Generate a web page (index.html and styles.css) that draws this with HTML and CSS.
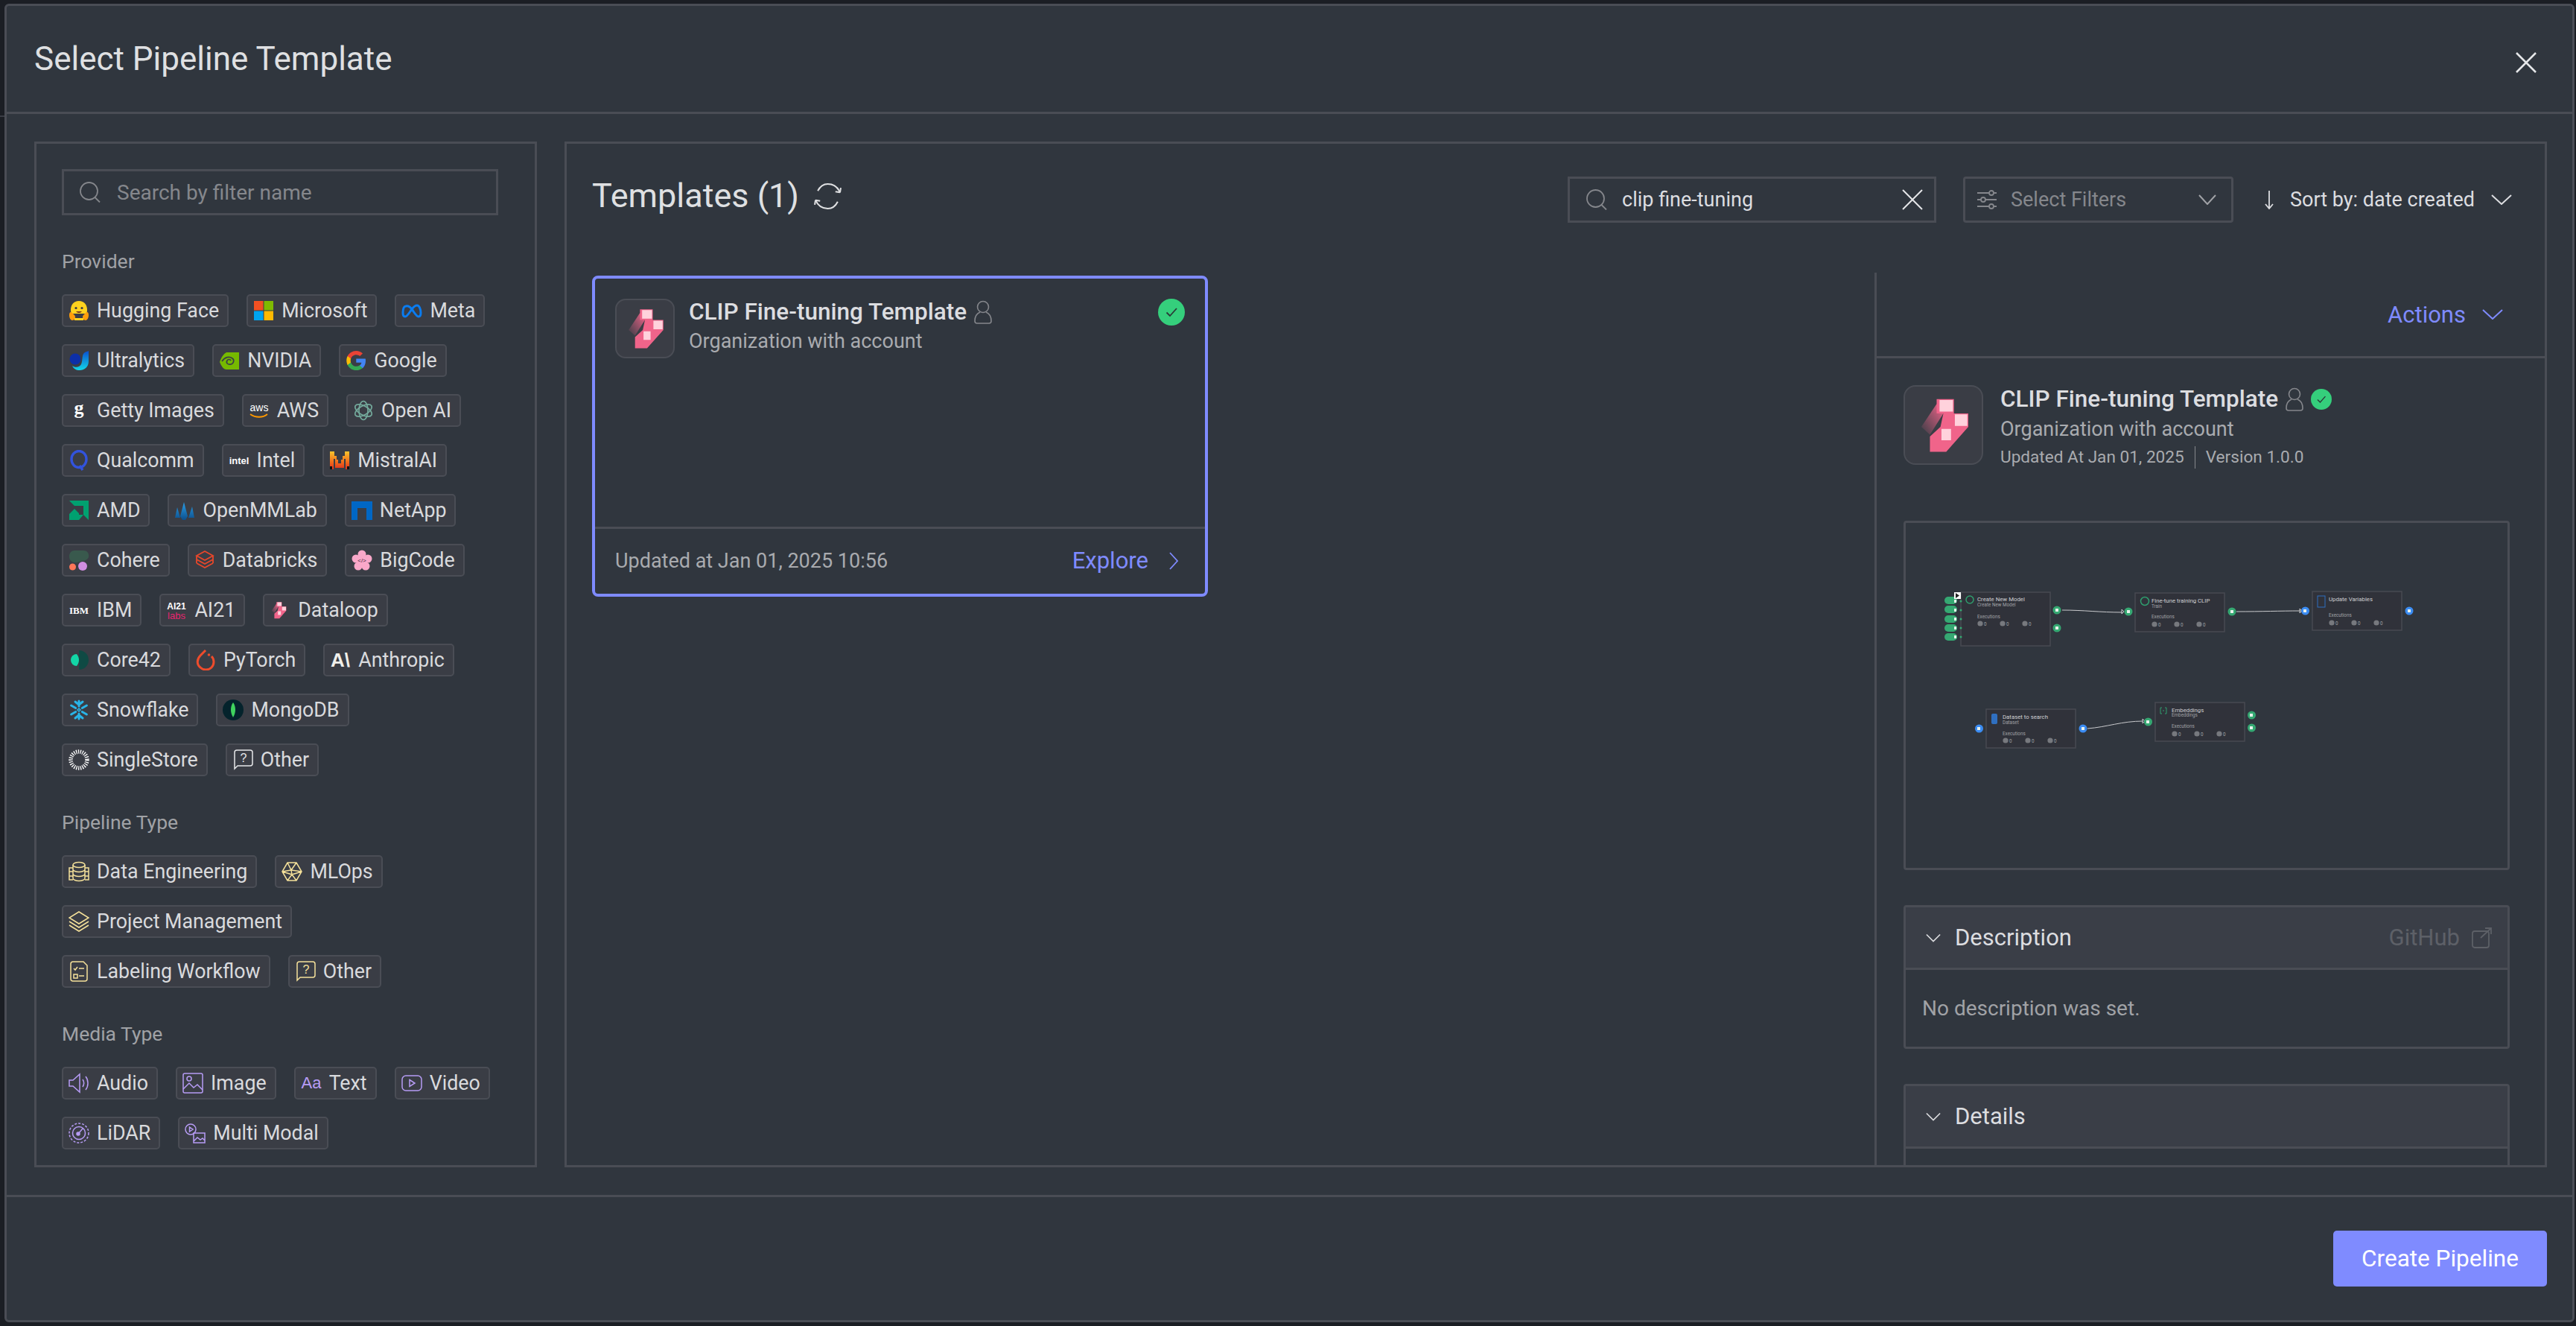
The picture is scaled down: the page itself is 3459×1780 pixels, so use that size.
FILE: index.html
```html
<!DOCTYPE html>
<html lang="en">
<head>
  <meta charset="UTF-8">
  <title>Select Pipeline Template</title>
  <link rel="stylesheet" href="styles.css">
</head>
<body>
<svg class="defs" aria-hidden="true">
  <defs>
    <linearGradient id="fade" x1="1" y1="0" x2="0" y2="1">
      <stop offset="0" stop-color="#f0648a"/>
      <stop offset="1" stop-color="#f0648a" stop-opacity="0"/>
    </linearGradient>
    <linearGradient id="ultra" x1="0" y1="0" x2="0" y2="1">
      <stop offset="0" stop-color="#0b4fd0"/>
      <stop offset="1" stop-color="#12d6e8"/>
    </linearGradient>
    <linearGradient id="mistral" x1="0" y1="0" x2="0" y2="1">
      <stop offset="0" stop-color="#f7c52d"/>
      <stop offset="0.6" stop-color="#f26a1b"/>
      <stop offset="1" stop-color="#e0301e"/>
    </linearGradient>
    <linearGradient id="mm" x1="0" y1="0" x2="0" y2="1">
      <stop offset="0" stop-color="#2a9fe8"/>
      <stop offset="1" stop-color="#0d4f8c"/>
    </linearGradient>
    <symbol id="dataloop" viewBox="0 0 80 80">
      <path d="M17 42 33 18 40 28 26 50Z" fill="url(#fade)"/>
      <path d="M33 13H51V28H66V42L43 68H26V52L37 42 40 28H33Z" fill="#f0648a"/>
      <path d="M36 14H50V26H36ZM52 29H65V41H52ZM38 44H48V56H38Z" fill="#ffd2dc"/>
    </symbol>
    <symbol id="exec" viewBox="0 0 100 10">
      <circle cx="4" cy="5" r="3.600" fill="#77797e"/>
      <text x="9" y="7.600" class="n-sub">0</text>
      <circle cx="34" cy="5" r="3.600" fill="#77797e"/>
      <text x="39" y="7.600" class="n-sub">0</text>
      <circle cx="64" cy="5" r="3.600" fill="#77797e"/>
      <text x="69" y="7.600" class="n-sub">0</text>
    </symbol>
    <symbol id="person" viewBox="0 0 24 32">
      <circle cx="12" cy="9" r="7.500" fill="none" stroke="currentColor" stroke-width="1.600"/>
      <path d="M8 16C3 18 1 23 1 28 1 30 2 31 4 31H20C22 31 23 30 23 28 23 23 21 18 16 16" fill="none" stroke="currentColor" stroke-width="1.600"/>
    </symbol>
    <symbol id="check" viewBox="0 0 36 36">
      <circle cx="18" cy="18" r="18" fill="#35cf7c"/>
      <path d="M11.500 18.500 16 23 25 13" fill="none" stroke="#2b3a38" stroke-width="1.800"/>
    </symbol>
  </defs>
</svg>

<div class="modal">
  <header class="modal-head">
    <h1>Select Pipeline Template</h1>
    <svg class="close" viewBox="0 0 28 28"><path d="M1 1 27 27M27 1 1 27"/></svg>
  </header>

  <div class="modal-body">
    <aside class="filters">
      <div class="filter-search">
        <svg class="ico-search" viewBox="0 0 28 28"><circle cx="12.500" cy="12.500" r="11.500"/><path d="M20.500 21 27 27.500"/></svg>
        <span>Search by filter name</span>
      </div>

      <h3 class="filter-title">Provider</h3>
      <div class="chips">
        <span class="chip"><svg viewBox="0 0 28 28"><path d="M14 1C7 1 3 6 3 13c0 2 .5 4 1 5h20c.6-1 1-3 1-5 0-7-4-12-11-12Z" fill="#ffd21e"/><circle cx="10" cy="10.500" r="1.600" fill="#3a3b45"/><circle cx="18" cy="10.500" r="1.600" fill="#3a3b45"/><path d="M10 15c2 2.600 6 2.600 8 0" fill="#6b2b20"/><path d="M1 20c0-4 2-5 4-3l3 3c2 2 1 7-3 7-2 0-4-3-4-7ZM27 20c0-4-2-5-4-3l-3 3c-2 2-1 7 3 7 2 0 4-3 4-7Z" fill="#ff9d0b"/><path d="M8 24h12v3H8Z" fill="#ffd21e"/></svg>Hugging Face</span>
        <span class="chip"><svg viewBox="0 0 28 28"><path d="M1 1H13.500V13.500H1Z" fill="#f25022"/><path d="M14.500 1H27V13.500H14.500Z" fill="#7fba00"/><path d="M1 14.500H13.500V27H1Z" fill="#00a4ef"/><path d="M14.500 14.500H27V27H14.500Z" fill="#ffb900"/></svg>Microsoft</span>
        <span class="chip"><svg viewBox="0 0 28 28"><path d="M6 8C3 8 2 13 2 17c0 3 1 5 3 5 3 0 6-6 9-10 3-4 5-5 7-5 3 0 5 5 5 10 0 3-1 5-3 5-3 0-6-6-9-10-3-4-5-5-8-4Z" fill="none" stroke="#0a7cf0" stroke-width="3"/></svg>Meta</span>
        <span class="chip"><svg viewBox="0 0 28 28"><path d="M27 1V15C27 23 21 27 15 27 10 27 7 25 5 21 9 24 15 23 17 19 19 15 18 8 20 5 22 2 25 2 27 1Z" fill="url(#ultra)"/><circle cx="9" cy="12" r="7.500" fill="#0d2fa8"/></svg>Ultralytics</span>
        <span class="chip"><svg viewBox="0 0 28 28"><path d="M10 3H27V26H10C6 26 3 21 1 16 3 10 6 5 10 3Z" fill="#76b900"/><path d="M4 15C8 9 14 8 18 11 21 13 20 18 16 19 12 20 9 17 11 14 12 12 15 12 16 14" fill="none" stroke="#3a3e47" stroke-width="1.700"/></svg>NVIDIA</span>
        <span class="chip"><svg viewBox="0 0 28 28"><path d="M27 14.300c0-1-.1-1.900-.3-2.800H14.300v5.300h7.100c-.3 1.700-1.200 3.100-2.600 4v3.400h4.200c2.500-2.300 4-5.700 4-9.900Z" fill="#4285f4"/><path d="M14.300 27c3.500 0 6.500-1.200 8.600-3.100l-4.200-3.300c-1.200.8-2.700 1.200-4.400 1.200-3.400 0-6.200-2.300-7.200-5.300H2.700v3.400C4.800 24.100 9.200 27 14.300 27Z" fill="#34a853"/><path d="M7.100 16.500c-.3-.8-.4-1.600-.4-2.500s.2-1.700.4-2.500V8.100H2.700C1.800 9.900 1.300 11.900 1.300 14s.5 4.100 1.400 5.900l4.400-3.400Z" fill="#fbbc05"/><path d="M14.300 6.200c1.900 0 3.600.7 5 1.900l3.700-3.700C20.800 2.300 17.800 1 14.300 1 9.200 1 4.800 3.900 2.700 8.100l4.400 3.400c1-3 3.800-5.300 7.200-5.300Z" fill="#ea4335"/></svg>Google</span>
        <span class="chip"><svg viewBox="0 0 28 28"><text x="14" y="19" class="logo-text getty">g</text></svg>Getty Images</span>
        <span class="chip"><svg viewBox="0 0 28 28"><text x="14" y="15" class="logo-text aws">aws</text><path d="M2 19C9 24 19 24 25 19" fill="none" stroke="#f90" stroke-width="1.800"/></svg>AWS</span>
        <span class="chip"><svg viewBox="0 0 28 28" fill="none" stroke="#74aa9c" stroke-width="1.600"><ellipse cx="14" cy="14" rx="6" ry="12.500"/><ellipse cx="14" cy="14" rx="6" ry="12.500" transform="rotate(60 14 14)"/><ellipse cx="14" cy="14" rx="6" ry="12.500" transform="rotate(120 14 14)"/></svg>Open AI</span>
        <span class="chip"><svg viewBox="0 0 28 28" fill="none" stroke="#3253dc" stroke-width="3.400"><ellipse cx="14" cy="12.500" rx="10" ry="11"/><path d="M15 21 19 27"/></svg>Qualcomm</span>
        <span class="chip"><svg viewBox="0 0 28 28"><text x="14" y="19" class="logo-text intel">intel</text></svg>Intel</span>
        <span class="chip"><svg viewBox="0 0 28 28"><path d="M1 2H7V8H10V13H12V18H16V13H18V8H21V2H27V26H22V12H20V24H8V12H6V26H1Z" fill="url(#mistral)"/><path d="M1 22H4V26H1ZM24 22H27V26H24Z" fill="#111"/></svg>MistralAI</span>
        <span class="chip"><svg viewBox="0 0 28 28"><path d="M1 1H27V27L20 20V8H8Z" fill="#00a170"/><path d="M8 12 14 18V20H20L14 27H1V19Z" fill="#00a170"/></svg>AMD</span>
        <span class="chip"><svg viewBox="0 0 28 28"><path d="M1 24 4 10 8 24ZM8 22 13 3 18 22 15 27H11ZM19 24 24 9 27 24Z" fill="url(#mm)"/></svg>OpenMMLab</span>
        <span class="chip"><svg viewBox="0 0 28 28"><path d="M0 2H28V27H20V11H8V27H0Z" fill="#0067c5"/></svg>NetApp</span>
        <span class="chip"><svg viewBox="0 0 28 28"><path d="M8 1H20C26 1 28 6 27 10 25 15 18 15 12 17 7 18 1 16 1 9 1 4 4 1 8 1Z" fill="#39594d"/><circle cx="5.500" cy="23" r="4.500" fill="#ff7759"/><circle cx="19" cy="22" r="6" fill="#d18ee2"/></svg>Cohere</span>
        <span class="chip"><svg viewBox="0 0 28 28" fill="none" stroke="#e8472b" stroke-width="1.800"><path d="M14 2 25 8 14 14 3 8ZM3 13 14 19 25 13M3 18 14 24 25 18M3 8V13M3 13V18M25 8V18"/></svg>Databricks</span>
        <span class="chip"><svg viewBox="0 0 28 28"><g fill="#f9a8c9"><circle cx="14" cy="6" r="5.500"/><circle cx="22" cy="12" r="5.500"/><circle cx="19" cy="22" r="5.500"/><circle cx="9" cy="22" r="5.500"/><circle cx="6" cy="12" r="5.500"/><circle cx="14" cy="14" r="7"/></g><text x="14" y="17" class="logo-text code">&lt;/&gt;</text></svg>BigCode</span>
        <span class="chip"><svg viewBox="0 0 28 28"><text x="14" y="19" class="logo-text ibm">IBM</text></svg>IBM</span>
        <span class="chip"><svg viewBox="0 0 28 28"><text x="14" y="12.500" class="logo-text ai21">AI21</text><text x="14" y="25.500" class="logo-text labs">labs</text></svg>AI21</span>
        <span class="chip"><svg viewBox="0 0 28 28"><use href="#dataloop" x="-4" y="-2" width="32" height="32"/></svg>Dataloop</span>
        <span class="chip"><svg viewBox="0 0 28 28"><path d="M14 1A13 13 0 0 1 14 27Z" fill="#0f4a44"/><path d="M11 6A8 8 0 0 0 11 22C15 17 15 11 11 6Z" fill="#12d6a6"/></svg>Core42</span>
        <span class="chip"><svg viewBox="0 0 28 28"><path d="M14 1 7 8C2 13 2 20 7 24 11 28 18 28 22 24 26 20 26 13 22 9" fill="none" stroke="#ee4c2c" stroke-width="3"/><circle cx="18.500" cy="7" r="1.800" fill="#ee4c2c"/></svg>PyTorch</span>
        <span class="chip"><svg viewBox="0 0 28 28"><text x="14" y="23" class="logo-text anthropic">A\</text></svg>Anthropic</span>
        <span class="chip"><svg viewBox="0 0 28 28" fill="none" stroke="#29b5e8" stroke-width="3" stroke-linecap="round"><path d="M14 2V9M14 19V26M3.600 8 9.700 11.500M18.300 16.500 24.400 20M3.600 20 9.700 16.500M18.300 11.500 24.400 8M9 3 14 7 19 3M9 25 14 21 19 25"/><path d="M14 12 16 14 14 16 12 14Z" stroke-width="1.500"/></svg>Snowflake</span>
        <span class="chip"><svg viewBox="0 0 28 28"><circle cx="14" cy="14" r="14" fill="#04232c"/><path d="M14 4C18 9 18 18 14 24 10 18 10 9 14 4Z" fill="#3fd35e"/></svg>MongoDB</span>
        <span class="chip"><svg viewBox="0 0 28 28" fill="none" stroke="#fff"><circle cx="14" cy="14" r="11" stroke-width="5.500" stroke-dasharray="1.300 1.500"/></svg>SingleStore</span>
        <span class="chip"><svg class="white-line" viewBox="0 0 28 28"><path d="M3 26V4Q3 1 6 1H24Q27 1 27 4V19Q27 22 24 22H7Z"/><text x="15" y="17" class="logo-text q">?</text></svg>Other</span>
      </div>

      <h3 class="filter-title">Pipeline Type</h3>
      <div class="chips">
        <span class="chip"><svg class="yellow-line" viewBox="0 0 28 28"><ellipse cx="14" cy="5" rx="8" ry="3.500"/><path d="M6 5V23C6 25 10 26.500 14 26.500S22 25 22 23V5M6 11C6 13 10 14.500 14 14.500S22 13 22 11M6 17C6 19 10 20.500 14 20.500S22 19 22 17M6 9H1V25H6M22 9H27V25H22M1 14H6M1 20H6M22 14H27M22 20H27"/></svg>Data Engineering</span>
        <span class="chip"><svg class="yellow-line" viewBox="0 0 28 28"><path d="M8 2H20L27 14 20 26H8L1 14ZM8 2 13 12 1 14 14 18 8 26M20 2 13 12 27 14 14 18 20 26M8 2 20 2M13 12 14 18"/></svg>MLOps</span>
        <span class="chip"><svg class="yellow-line" viewBox="0 0 28 28"><path d="M14 1 27 9 14 17 1 9ZM1 14 14 22 27 14M1 19 14 27 27 19"/></svg>Project Management</span>
        <span class="chip"><svg class="yellow-line" viewBox="0 0 28 28"><path d="M6 1H20L25 6V24Q25 27 22 27H6Q3 27 3 24V4Q3 1 6 1ZM7 10 9 12 12 8M14 10H21M7 18H12V23H7ZM14 20H21"/></svg>Labeling Workflow</span>
        <span class="chip"><svg class="yellow-line" viewBox="0 0 28 28"><path d="M3 26V4Q3 1 6 1H24Q27 1 27 4V19Q27 22 24 22H7Z"/><text x="15" y="17" class="logo-text q-y">?</text></svg>Other</span>
      </div>

      <h3 class="filter-title">Media Type</h3>
      <div class="chips">
        <span class="chip"><svg class="purple-line" viewBox="0 0 28 28"><path d="M1 10H6L15 2V26L6 18H1ZM19 9C21 12 21 16 19 19M23 5C27 10 27 18 23 23"/></svg>Audio</span>
        <span class="chip"><svg class="purple-line" viewBox="0 0 28 28"><rect x="1" y="1" width="26" height="26" rx="2"/><circle cx="9" cy="8" r="3"/><path d="M1 22 9 14 15 20 20 16 27 23"/></svg>Image</span>
        <span class="chip"><svg viewBox="0 0 28 28"><text x="14" y="21" class="logo-text aa">Aa</text></svg>Text</span>
        <span class="chip"><svg class="purple-line" viewBox="0 0 28 28"><rect x="1" y="4" width="26" height="20" rx="5"/><path d="M11 9.500 18 14 11 18.500Z"/></svg>Video</span>
        <span class="chip"><svg class="purple-line" viewBox="0 0 28 28"><circle cx="14" cy="14" r="13" stroke-dasharray="3 2"/><circle cx="14" cy="14" r="8.500"/><circle cx="13" cy="15" r="2" fill="#b79cf5"/><path d="M13 15 19 8"/></svg>LiDAR</span>
        <span class="chip"><svg class="purple-line" viewBox="0 0 28 28"><circle cx="8" cy="9" r="7"/><path d="M6.500 6 11 9 6.500 12ZM12 14H27V27H12ZM12 25 17 20 21 23 24 21 27 24"/></svg>Multi Modal</span>
        <span class="chip"><svg class="purple-line" viewBox="0 0 28 28"><rect x="1" y="4" width="26" height="20" rx="2"/></svg>Structured Data</span>
      </div>
    </aside>

    <main class="templates">
      <div class="toolbar">
        <h2>Templates (1)</h2>
        <svg class="refresh" viewBox="0 0 36 36"><path d="M5 11C8 5 13 2 18 2 25 2 31 6 34 13M31 25C28 31 23 34 18 34 11 34 5 30 2 23"/><path d="M34 13 35 7M34 13 28 12M2 23 1 29M2 23 8 24"/></svg>
        <div class="toolbar-right">
          <div class="box search-box">
            <svg class="ico-search" viewBox="0 0 28 28"><circle cx="12.500" cy="12.500" r="11.500"/><path d="M20.500 21 27 27.500"/></svg>
            <span class="value">clip fine-tuning</span>
            <svg class="clear" viewBox="0 0 28 28"><path d="M1 1 27 27M27 1 1 27"/></svg>
          </div>
          <div class="box select-box">
            <svg class="sliders" viewBox="0 0 28 28"><path d="M1 5H27M1 14H27M1 23H27"/><circle cx="20" cy="5" r="3"/><circle cx="9" cy="14" r="3"/><circle cx="20" cy="23" r="3"/></svg>
            <span class="placeholder">Select Filters</span>
            <svg class="chev" viewBox="0 0 24 14"><path d="M1 1 12 13 23 1"/></svg>
          </div>
          <div class="sort">
            <svg class="down" viewBox="0 0 12 26"><path d="M6 1V25M1 19 6 25 11 19"/></svg>
            <span>Sort by: date created</span>
            <svg class="chev light" viewBox="0 0 28 14"><path d="M1 1 14 13 27 1"/></svg>
          </div>
        </div>
      </div>

      <div class="content">
        <div class="list">
          <article class="card">
            <div class="card-top">
              <div class="logo-box"><svg viewBox="0 0 80 80"><use href="#dataloop" width="80" height="80"/></svg></div>
              <div class="card-info">
                <div class="name">CLIP Fine-tuning Template <svg class="person" viewBox="0 0 24 32"><use href="#person"/></svg></div>
                <div class="org">Organization with account</div>
              </div>
              <svg class="ok" viewBox="0 0 36 36"><use href="#check"/></svg>
            </div>
            <div class="card-foot">
              <span class="updated">Updated at Jan 01, 2025 10:56</span>
              <span class="explore">Explore <svg viewBox="0 0 12 24"><path d="M1 1 11 12 1 23"/></svg></span>
            </div>
          </article>
        </div>

        <section class="detail">
          <div class="actions">
            <span>Actions</span>
            <svg viewBox="0 0 28 14"><path d="M1 1 14 13 27 1"/></svg>
          </div>
          <div class="detail-inner">
            <div class="detail-head">
              <div class="logo-box big"><svg viewBox="0 0 80 80"><use href="#dataloop" width="80" height="80"/></svg></div>
              <div class="card-info">
                <div class="name">CLIP Fine-tuning Template <svg class="person" viewBox="0 0 24 32"><use href="#person"/></svg><svg class="ok small" viewBox="0 0 36 36"><use href="#check"/></svg></div>
                <div class="org">Organization with account</div>
                <div class="meta"><span>Updated At Jan 01, 2025</span><span class="version">Version 1.0.0</span></div>
              </div>
            </div>

            <div class="preview">
              <svg viewBox="2560 703 805 463" width="805" height="463">
                <path class="link" d="M2770 820C2800 820 2820 823 2851 823M2853 822l-3-3v6ZM3004 822C3040 822 3060 821 3091 821M3092 821l-3-3v6ZM2804 979C2830 977 2850 969 2879 969M2881 969l-3-3v6Z"/>

                <g transform="translate(2634 796)">
                  <rect class="node" width="120" height="72"/>
                  <circle cx="12" cy="10" r="5" fill="none" stroke="#2f9e6e" stroke-width="1.500"/>
                  <text x="22" y="12" class="n-title">Create New Model</text>
                  <text x="22" y="19" class="n-sub">Create New Model</text>
                  <text x="22" y="35" class="n-sub">Executions</text>
                  <use href="#exec" x="22" y="37" width="100" height="10"/>
                </g>
                <g transform="translate(2868 797)">
                  <rect class="node" width="120" height="52"/>
                  <circle cx="13" cy="11" r="5.500" fill="none" stroke="#2f9e6e" stroke-width="1.500"/>
                  <text x="22" y="13" class="n-title">Fine-tune training CLIP</text>
                  <text x="22" y="20" class="n-sub">Train</text>
                  <text x="22" y="34" class="n-sub">Executions</text>
                  <use href="#exec" x="22" y="37" width="100" height="10"/>
                </g>
                <g transform="translate(3106 795)">
                  <rect class="node" width="120" height="52"/>
                  <rect x="7" y="6" width="10" height="15" fill="none" stroke="#2f6fc0"/>
                  <text x="22" y="13" class="n-title">Update Variables</text>
                  <text x="22" y="34" class="n-sub">Executions</text>
                  <use href="#exec" x="22" y="37" width="100" height="10"/>
                </g>
                <g transform="translate(2668 953)">
                  <rect class="node" width="120" height="52"/>
                  <rect x="7" y="6" width="8" height="14" rx="2" fill="#2f6fc0"/>
                  <text x="22" y="13" class="n-title">Dataset to search</text>
                  <text x="22" y="20" class="n-sub">Dataset</text>
                  <text x="22" y="35" class="n-sub">Executions</text>
                  <use href="#exec" x="22" y="37" width="100" height="10"/>
                </g>
                <g transform="translate(2895 944)">
                  <rect class="node" width="120" height="52"/>
                  <path d="M9 7H7V15H9M13 7H15V15H13M10 11H12" fill="none" stroke="#2f9e6e"/>
                  <text x="22" y="13" class="n-title">Embeddings</text>
                  <text x="22" y="19" class="n-sub">Embeddings</text>
                  <text x="22" y="34" class="n-sub">Executions</text>
                  <use href="#exec" x="22" y="37" width="100" height="10"/>
                </g>

                <g class="pill-green">
                  <rect x="2612" y="802" width="17" height="10" rx="5"/>
                  <rect x="2612" y="814" width="17" height="10" rx="5"/>
                  <rect x="2612" y="827" width="17" height="10" rx="5"/>
                  <rect x="2612" y="839" width="17" height="10" rx="5"/>
                  <rect x="2612" y="851" width="17" height="10" rx="5"/>
                  <circle cx="2634" cy="808" r="1.500"/><circle cx="2634" cy="820" r="1.500"/><circle cx="2634" cy="832" r="1.500"/><circle cx="2634" cy="844" r="1.500"/><circle cx="2634" cy="856" r="1.500"/>
                  <ellipse cx="2763" cy="820" rx="5.500" ry="5.500"/>
                  <ellipse cx="2763" cy="844" rx="5.500" ry="5.500"/>
                  <ellipse cx="2859" cy="822" rx="5.500" ry="5.500"/>
                  <ellipse cx="2998" cy="822" rx="5.500" ry="5.500"/>
                  <ellipse cx="2885.500" cy="970" rx="5.500" ry="5.500"/>
                  <ellipse cx="3024.500" cy="961" rx="5.500" ry="5.500"/>
                  <ellipse cx="3024.500" cy="978" rx="5.500" ry="5.500"/>
                </g>
                <g class="pill-blue">
                  <ellipse cx="3096.500" cy="821" rx="5.500" ry="5.500"/>
                  <ellipse cx="3236" cy="821" rx="5.500" ry="5.500"/>
                  <ellipse cx="2658.500" cy="979" rx="5.500" ry="5.500"/>
                  <ellipse cx="2798" cy="979" rx="5.500" ry="5.500"/>
                </g>
                <g fill="#e8f2ec">
                  <rect x="2625" y="806" width="3" height="4"/><rect x="2625" y="818" width="3" height="4"/><rect x="2625" y="830" width="3" height="4"/><rect x="2625" y="842" width="3" height="4"/><rect x="2625" y="854" width="3" height="4"/>
                  <rect x="2761" y="818" width="4" height="4"/><rect x="2761" y="842" width="4" height="4"/><rect x="2857" y="820" width="4" height="4"/><rect x="2996" y="820" width="4" height="4"/><rect x="3094" y="819" width="4" height="4"/><rect x="3234" y="819" width="4" height="4"/><rect x="2656" y="977" width="4" height="4"/><rect x="2796" y="977" width="4" height="4"/><rect x="2883" y="968" width="4" height="4"/><rect x="3022" y="959" width="4" height="4"/><rect x="3022" y="976" width="4" height="4"/>
                </g>
                <rect x="2625" y="796" width="9" height="9" fill="#fff"/>
                <path d="M2627 797 2632 800.500 2627 804Z" fill="#222"/>
              </svg>
            </div>

            <div class="panel">
              <div class="panel-head">
                <svg class="panel-chev" viewBox="0 0 22 12"><path d="M1 1 11 11 21 1"/></svg>
                <span>Description</span>
                <span class="github">GitHub <svg viewBox="0 0 28 28"><rect x="1" y="5" width="22" height="22" rx="3"/><path d="M12 14 26 1M18 1H26V9"/></svg></span>
              </div>
              <div class="panel-body">No description was set.</div>
            </div>

            <div class="panel">
              <div class="panel-head">
                <svg class="panel-chev" viewBox="0 0 22 12"><path d="M1 1 11 11 21 1"/></svg>
                <span>Details</span>
              </div>
              <div class="panel-body"></div>
            </div>
          </div>
        </section>
      </div>
    </main>
  </div>

  <footer class="modal-foot">
    <button class="create">Create Pipeline</button>
  </footer>
</div>
</body>
</html>
```

FILE: styles.css
```css
* {
  box-sizing: border-box;
}

html, body {
  margin: 0;
  height: 100%;
}

body {
  background: #1b1e24 linear-gradient(#3a3d45, #3a3d45) no-repeat 0 155px / 6px 2px;
  color: #dcdde0;
  font-family: Roboto, "Liberation Sans", sans-serif;
  padding: 5px 2px 5px 6px;
  overflow: hidden;
}

.defs {
  position: absolute;
  width: 0;
  height: 0;
}

.modal {
  height: 100%;
  background-color: #30363e;
  border: 3px solid #4a4d55;
  border-radius: 6px;
  display: flex;
  flex-direction: column;
}

.modal-head {
  height: 145px;
  flex: none;
  border-bottom: 3px solid #4a4d55;
  padding: 0 48px 0 37px;
  display: flex;
  align-items: center;
  justify-content: space-between;
}

.modal-head h1 {
  margin: 0;
  font-size: 44px;
  font-weight: 400;
  color: #dfe0e2;
}

.close {
  width: 28px;
  height: 28px;
  fill: none;
  stroke: #e6e7e9;
  stroke-width: 2.5;
  margin-top: 9px;
}

.modal-body {
  flex: 1;
  min-height: 0;
  display: flex;
  gap: 37px;
  padding: 37px 34px 37px 37px;
}

/* left column */
.filters {
  width: 675px;
  flex: none;
  border: 3px solid #4a4d55;
  padding: 34px 49px 0 34px;
  overflow: hidden;
}

.filter-search {
  height: 62px;
  border: 3px solid #4a4d55;
  display: flex;
  align-items: center;
  padding: 0 21px;
  gap: 22px;
  font-size: 28px;
  color: #85878c;
  margin-bottom: 45px;
}

.ico-search {
  width: 28px;
  height: 28px;
  flex: none;
  fill: none;
  stroke: #85878c;
  stroke-width: 1.8;
}

.filter-title {
  margin: 0 0 27px;
  font-size: 26.5px;
  line-height: 34px;
  font-weight: 400;
  color: #a0a2a6;
}

.chips {
  display: flex;
  flex-wrap: wrap;
  gap: 23px 24px;
  margin-bottom: 45px;
}

.chip {
  height: 44px;
  display: inline-flex;
  align-items: center;
  gap: 10px;
  padding: 0 11px 0 7px;
  background-color: #3a3d45;
  border: 2px solid #4a4d55;
  border-radius: 5px;
  font-size: 26.8px;
  color: #d9dadd;
  white-space: nowrap;
}

.chip svg {
  width: 28px;
  height: 28px;
  flex: none;
}

.logo-text {
  text-anchor: middle;
  font-family: "Liberation Sans", sans-serif;
}

.getty { font-family: "Liberation Serif", serif; font-size: 26px; font-weight: 700; fill: #fff; }
.aws { font-size: 14px; fill: #fff; }
.intel { font-size: 13px; font-weight: 700; fill: #fff; }
.code { font-size: 8px; fill: #4a2740; }
.ibm { font-family: "Liberation Serif", serif; font-size: 13px; font-weight: 700; fill: #fff; }
.ai21 { font-size: 12px; font-weight: 700; fill: #fff; }
.labs { font-size: 13px; fill: #e8246f; }
.anthropic { font-size: 26px; font-weight: 700; fill: #f0efea; }
.q { font-size: 16px; fill: #e6e7e9; stroke: none; }
.q-y { font-size: 16px; fill: #f5e19a; stroke: none; }
.aa { font-size: 22px; fill: #b79cf5; }

.white-line, .yellow-line, .purple-line {
  fill: none;
  stroke-width: 1.5;
}
.white-line { stroke: #e6e7e9; }
.yellow-line { stroke: #f5e19a; }
.purple-line { stroke: #b79cf5; }

/* right column */
.templates {
  flex: 1;
  min-width: 0;
  border: 3px solid #4a4d55;
  display: flex;
  flex-direction: column;
}

.toolbar {
  height: 173px;
  flex: none;
  display: flex;
  align-items: flex-start;
  padding: 44px 44px 0 34px;
}

.toolbar h2 {
  margin: 0;
  font-size: 45px;
  line-height: 52px;
  font-weight: 400;
  color: #dfe0e2;
}

.refresh {
  width: 37px;
  height: 37px;
  margin: 8px 0 0 20px;
  fill: none;
  stroke: #dfe0e2;
  stroke-width: 2;
}

.toolbar-right {
  margin-left: auto;
  display: flex;
  align-items: center;
  font-size: 27px;
}

.box {
  height: 62px;
  border: 3px solid #4a4d55;
  display: flex;
  align-items: center;
}

.search-box {
  width: 495px;
  padding: 0 15px 0 22px;
  gap: 20px;
}

.value {
  color: #dcdde0;
}

.clear {
  width: 28px;
  height: 28px;
  margin-left: auto;
  fill: none;
  stroke: #e6e7e9;
  stroke-width: 2;
}

.select-box {
  width: 363px;
  margin-left: 36px;
  padding: 0 20px 0 15px;
  gap: 18px;
  border-radius: 4px;
}

.placeholder {
  color: #85878c;
}

.sliders {
  width: 28px;
  height: 28px;
  fill: #30363e;
  stroke: #85878c;
  stroke-width: 1.8;
}

.chev {
  width: 24px;
  height: 14px;
  margin-left: auto;
  fill: none;
  stroke: #a0a2a6;
  stroke-width: 2;
}

.sort {
  margin-left: 42px;
  display: flex;
  align-items: center;
  gap: 22px;
  color: #dcdde0;
}

.down {
  width: 12px;
  height: 26px;
  fill: none;
  stroke: #dcdde0;
  stroke-width: 1.8;
}

.chev.light {
  width: 28px;
  stroke: #dcdde0;
}

.content {
  flex: 1;
  min-height: 0;
  display: flex;
}

.list {
  flex: 1;
  padding: 4px 0 0 34px;
}

.card {
  width: 827px;
  height: 431px;
  border: 4px solid #7f8bff;
  border-radius: 8px;
  display: flex;
  flex-direction: column;
}

.card-top {
  flex: 1;
  display: flex;
  align-items: flex-start;
  padding: 27px 27px 0;
}

.logo-box {
  width: 80px;
  height: 80px;
  flex: none;
  background-color: #3a3d45;
  border: 2px solid #4a4d55;
  border-radius: 14px;
  display: flex;
}

.logo-box svg {
  width: 100%;
  height: 100%;
}

.logo-box.big {
  width: 107px;
  height: 107px;
  border-radius: 16px;
}

.card-info {
  margin-left: 19px;
  flex: 1;
}

.name {
  font-size: 31.5px;
  line-height: 36px;
  font-weight: 500;
  color: #dcdde0;
  display: flex;
  align-items: center;
  gap: 10px;
}

.person {
  width: 24px;
  height: 32px;
  color: #85878c;
}

.org {
  margin-top: 5px;
  font-size: 27px;
  line-height: 33px;
  color: #a9abaf;
}

.ok {
  width: 36px;
  height: 36px;
  flex: none;
}

.ok.small {
  width: 28px;
  height: 28px;
}

.card-foot {
  height: 90px;
  flex: none;
  border-top: 3px solid #4a4d55;
  padding: 0 36px 2px 27px;
  display: flex;
  align-items: center;
  justify-content: space-between;
}

.updated {
  font-size: 27px;
  color: #a9abaf;
}

.explore {
  font-size: 31px;
  color: #7f8bff;
  display: flex;
  align-items: center;
  gap: 28px;
}

.explore svg {
  width: 12px;
  height: 24px;
  fill: none;
  stroke: #7f8bff;
  stroke-width: 1.8;
}

.detail {
  width: 900px;
  flex: none;
  border-left: 3px solid #4a4d55;
  overflow: hidden;
}

.actions {
  height: 115px;
  border-bottom: 3px solid #4a4d55;
  padding: 0 56px 0 0;
  display: flex;
  align-items: center;
  justify-content: flex-end;
  gap: 22px;
  font-size: 31px;
  color: #7f8bff;
}

.actions svg {
  width: 28px;
  height: 14px;
  fill: none;
  stroke: #7f8bff;
  stroke-width: 2;
}

.detail-inner {
  padding: 36px 47px 0 36px;
}

.detail-head {
  display: flex;
}

.detail-head .card-info {
  margin-left: 23px;
}

.detail-head .name {
  line-height: 38px;
}

.meta {
  margin-top: 6px;
  font-size: 22.6px;
  line-height: 30px;
  color: #a9abaf;
  display: flex;
}

.version {
  margin-left: 14px;
  padding-left: 14px;
  border-left: 1px solid #85878c;
}

.preview {
  height: 469px;
  margin-top: 70px;
  border: 3px solid #4a4d55;
  border-radius: 4px;
}

.preview svg {
  display: block;
}

.node {
  fill: #30323a;
  stroke: #474a52;
  stroke-width: 1.5;
}

.n-title {
  font-size: 7.8px;
  fill: #cfd0d3;
}

.n-sub {
  font-size: 6.3px;
  fill: #a0a2a6;
}

.link {
  fill: none;
  stroke: #c9cacd;
  stroke-width: 1;
}

.pill-green {
  fill: #35a872;
}

.pill-blue {
  fill: #3b8cf2;
}

.panel {
  margin-top: 47px;
  border: 3px solid #4a4d55;
  border-radius: 4px;
}

.panel-head {
  height: 84px;
  background-color: #3a3e47;
  border-bottom: 3px solid #4a4d55;
  display: flex;
  align-items: center;
  gap: 19px;
  padding: 0 20px 0 27px;
  font-size: 31px;
  color: #dcdde0;
}

.panel-chev {
  width: 20px;
  height: 12px;
  fill: none;
  stroke: #dcdde0;
  stroke-width: 1.8;
}

.github {
  margin-left: auto;
  color: #5d6067;
  display: flex;
  align-items: center;
  gap: 16px;
}

.github svg {
  width: 28px;
  height: 28px;
  fill: none;
  stroke: #5d6067;
  stroke-width: 1.8;
}

.panel-body {
  height: 103px;
  padding: 0 22px;
  display: flex;
  align-items: center;
  font-size: 28px;
  color: #a0a2a6;
}

.modal-foot {
  height: 168px;
  flex: none;
  border-top: 3px solid #4a4d55;
  display: flex;
  align-items: center;
  justify-content: flex-end;
  padding: 0 34px 0 0;
}

.create {
  width: 287px;
  height: 75px;
  border: none;
  border-radius: 5px;
  background-color: #7f8bff;
  color: #fff;
  font-family: Roboto, "Liberation Sans", sans-serif;
  font-size: 31.5px;
}
```
